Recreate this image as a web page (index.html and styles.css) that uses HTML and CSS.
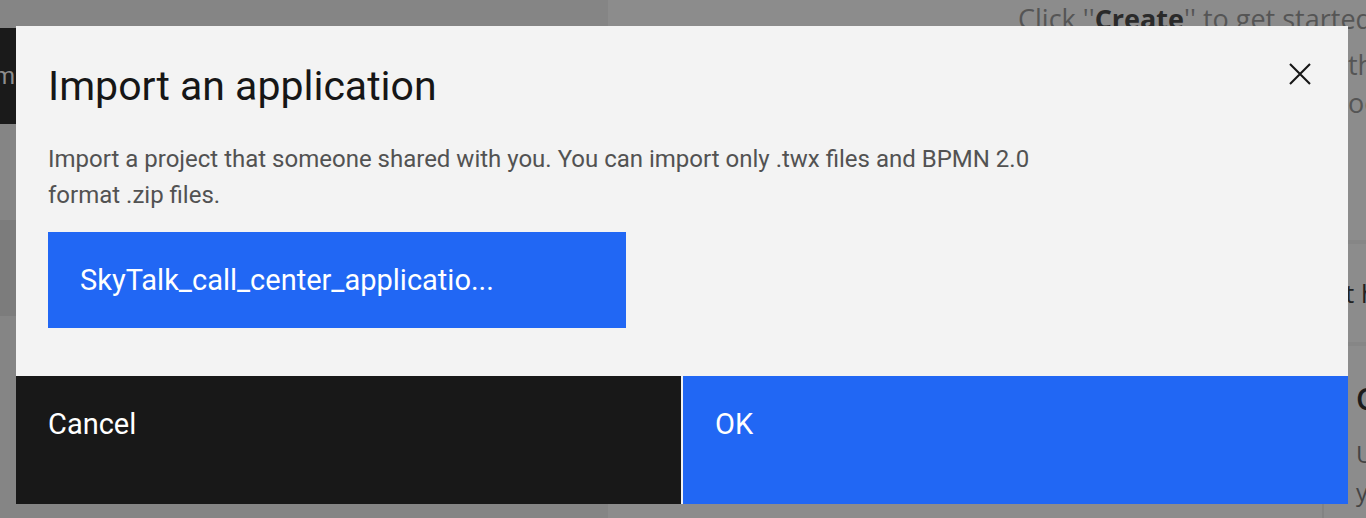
FILE: index.html
```html
<!DOCTYPE html>
<html lang="en">
<head>
<meta charset="utf-8">
<title>Import an application</title>
<link rel="stylesheet" href="styles.css">
</head>
<body>
<div class="page">
  <div class="left-col">
    <div class="dark-tab"><span>Import from</span></div>
    <div class="left-gap"></div>
    <div class="left-row"></div>
  </div>
  <div class="right-col">
    <div class="intro">
      <p class="intro-line first">Click ''<b>Create</b>'' to get started</p>
      <p class="intro-line"><span class="hidden-part">with a blank app or</span><span>the samples</span></p>
      <p class="intro-line"><span class="hidden-part">or read the guide</span><span>ook</span></p>
    </div>
    <div class="section"><span class="hidden-part">Learn more</span><span>t help</span></div>
    <div class="card">
      <div class="card-title">Create a new automation</div>
      <div class="card-text">Use an existing template so that</div>
      <div class="card-text">you can start quickly</div>
    </div>
  </div>
</div>

<div class="modal" role="dialog" aria-labelledby="modal-title">
  <div class="modal-header">
    <h2 class="modal-title" id="modal-title">Import an application</h2>
    <button class="close-btn" aria-label="Close">
      <svg width="24" height="24" viewBox="0 0 24 24" aria-hidden="true">
        <path d="M2 2 L22 22 M22 2 L2 22" stroke="#161616" stroke-width="2.1" fill="none"/>
      </svg>
    </button>
  </div>
  <div class="modal-body">
    <p class="modal-desc">Import a project that someone shared with you. You can import only .twx files and BPMN 2.0 format .zip files.</p>
    <button class="file-btn">SkyTalk_call_center_applicatio...</button>
  </div>
  <div class="modal-footer">
    <button class="btn btn-secondary">Cancel</button>
    <button class="btn btn-primary">OK</button>
  </div>
</div>
</body>
</html>
```

FILE: styles.css
```css
html, body {
  margin: 0;
  padding: 0;
  height: 100%;
  overflow: hidden;
}

body {
  background: #8b8b8b;
  font-family: "Roboto", "Liberation Sans", sans-serif;
  position: relative;
}

.page {
  display: grid;
  grid-template-columns: 608px 1fr;
  height: 518px;
}

/* ---------- dimmed page behind the modal ---------- */
.left-col {
  background: #858585;
  padding-top: 28px;
  display: flex;
  flex-direction: column;
}

.dark-tab {
  height: 96px;
  width: 16px;
  background: #1a1a1a;
  color: #8e8e8e;
  font-size: 24px;
  line-height: 96px;
  overflow: hidden;
  white-space: nowrap;
  direction: rtl;
}

.dark-tab span {
  direction: ltr;
  unicode-bidi: bidi-override;
  margin-right: 1px;
}

.left-gap {
  height: 96px;
}

.left-row {
  height: 96px;
  width: 16px;
  background: #7c7c7c;
}

.right-col {
  background: #8c8c8c;
  overflow: hidden;
  white-space: nowrap;
  color: #3f3f3f;
  font-family: "Open Sans", "Noto Sans", sans-serif;
}

.intro {
  box-sizing: border-box;
  height: 244px;
  padding: 0 0 0 410px;
  border-bottom: 4px solid #868686;
}

.intro-line {
  display: flex;
  margin: 0;
  font-size: 27px;
  line-height: 38px;
  color: #555;
}

.intro-line.first {
  display: block;
  margin-bottom: 8px;
}

.intro-line b {
  color: #2a2a2a;
}

.hidden-part {
  flex: 0 0 330px;
  overflow: hidden;
}

.section {
  box-sizing: border-box;
  height: 102px;
  border-bottom: 4px solid #868686;
  display: flex;
  align-items: center;
  padding-left: 409px;
  font-size: 26px;
  color: #222;
}

.section .hidden-part {
  flex: 0 0 328px;
}

.card {
  margin-left: 714px;
  border-left: 2px solid #838383;
  padding: 33px 0 0 32px;
  height: 200px;
}

.card-title {
  font-size: 30px;
  font-weight: 600;
  color: #1c1c1c;
  line-height: 40px;
  margin-bottom: 16px;
}

.card-text {
  font-size: 24px;
  color: #444;
  line-height: 38px;
}

/* ---------- modal ---------- */
.modal {
  position: absolute;
  left: 16px;
  top: 26px;
  width: 1332px;
  background: #f3f3f3;
  display: flex;
  flex-direction: column;
  font-family: "Roboto", "Liberation Sans", sans-serif;
}

.modal-header {
  display: flex;
  justify-content: space-between;
  align-items: flex-start;
  padding: 36px 36px 0 32px;
}

.modal-title {
  margin: 0;
  font-size: 41px;
  font-weight: 400;
  line-height: 48px;
  color: #161616;
}

.close-btn {
  background: none;
  border: 0;
  padding: 0;
  width: 24px;
  height: 24px;
}

.close-btn svg {
  display: block;
}

.modal-body {
  padding: 31px 32px 48px 32px;
}

.modal-desc {
  margin: 0;
  max-width: 1000px;
  font-size: 24px;
  line-height: 36px;
  color: #525252;
}

.file-btn {
  display: flex;
  align-items: center;
  margin-top: 19px;
  width: 578px;
  height: 96px;
  border: 0;
  background: #2167f4;
  color: #ffffff;
  font-family: inherit;
  font-size: 29px;
  text-align: left;
  padding: 0 32px;
}

.modal-footer {
  display: grid;
  grid-template-columns: 1fr 1fr;
  column-gap: 2px;
  height: 128px;
}

.btn {
  border: 0;
  font-family: inherit;
  font-size: 29px;
  line-height: 34px;
  text-align: left;
  padding: 31px 32px 0 32px;
  display: flex;
  align-items: flex-start;
  color: #ffffff;
}

.btn-secondary {
  background: #181818;
}

.btn-primary {
  background: #2167f4;
}
```
